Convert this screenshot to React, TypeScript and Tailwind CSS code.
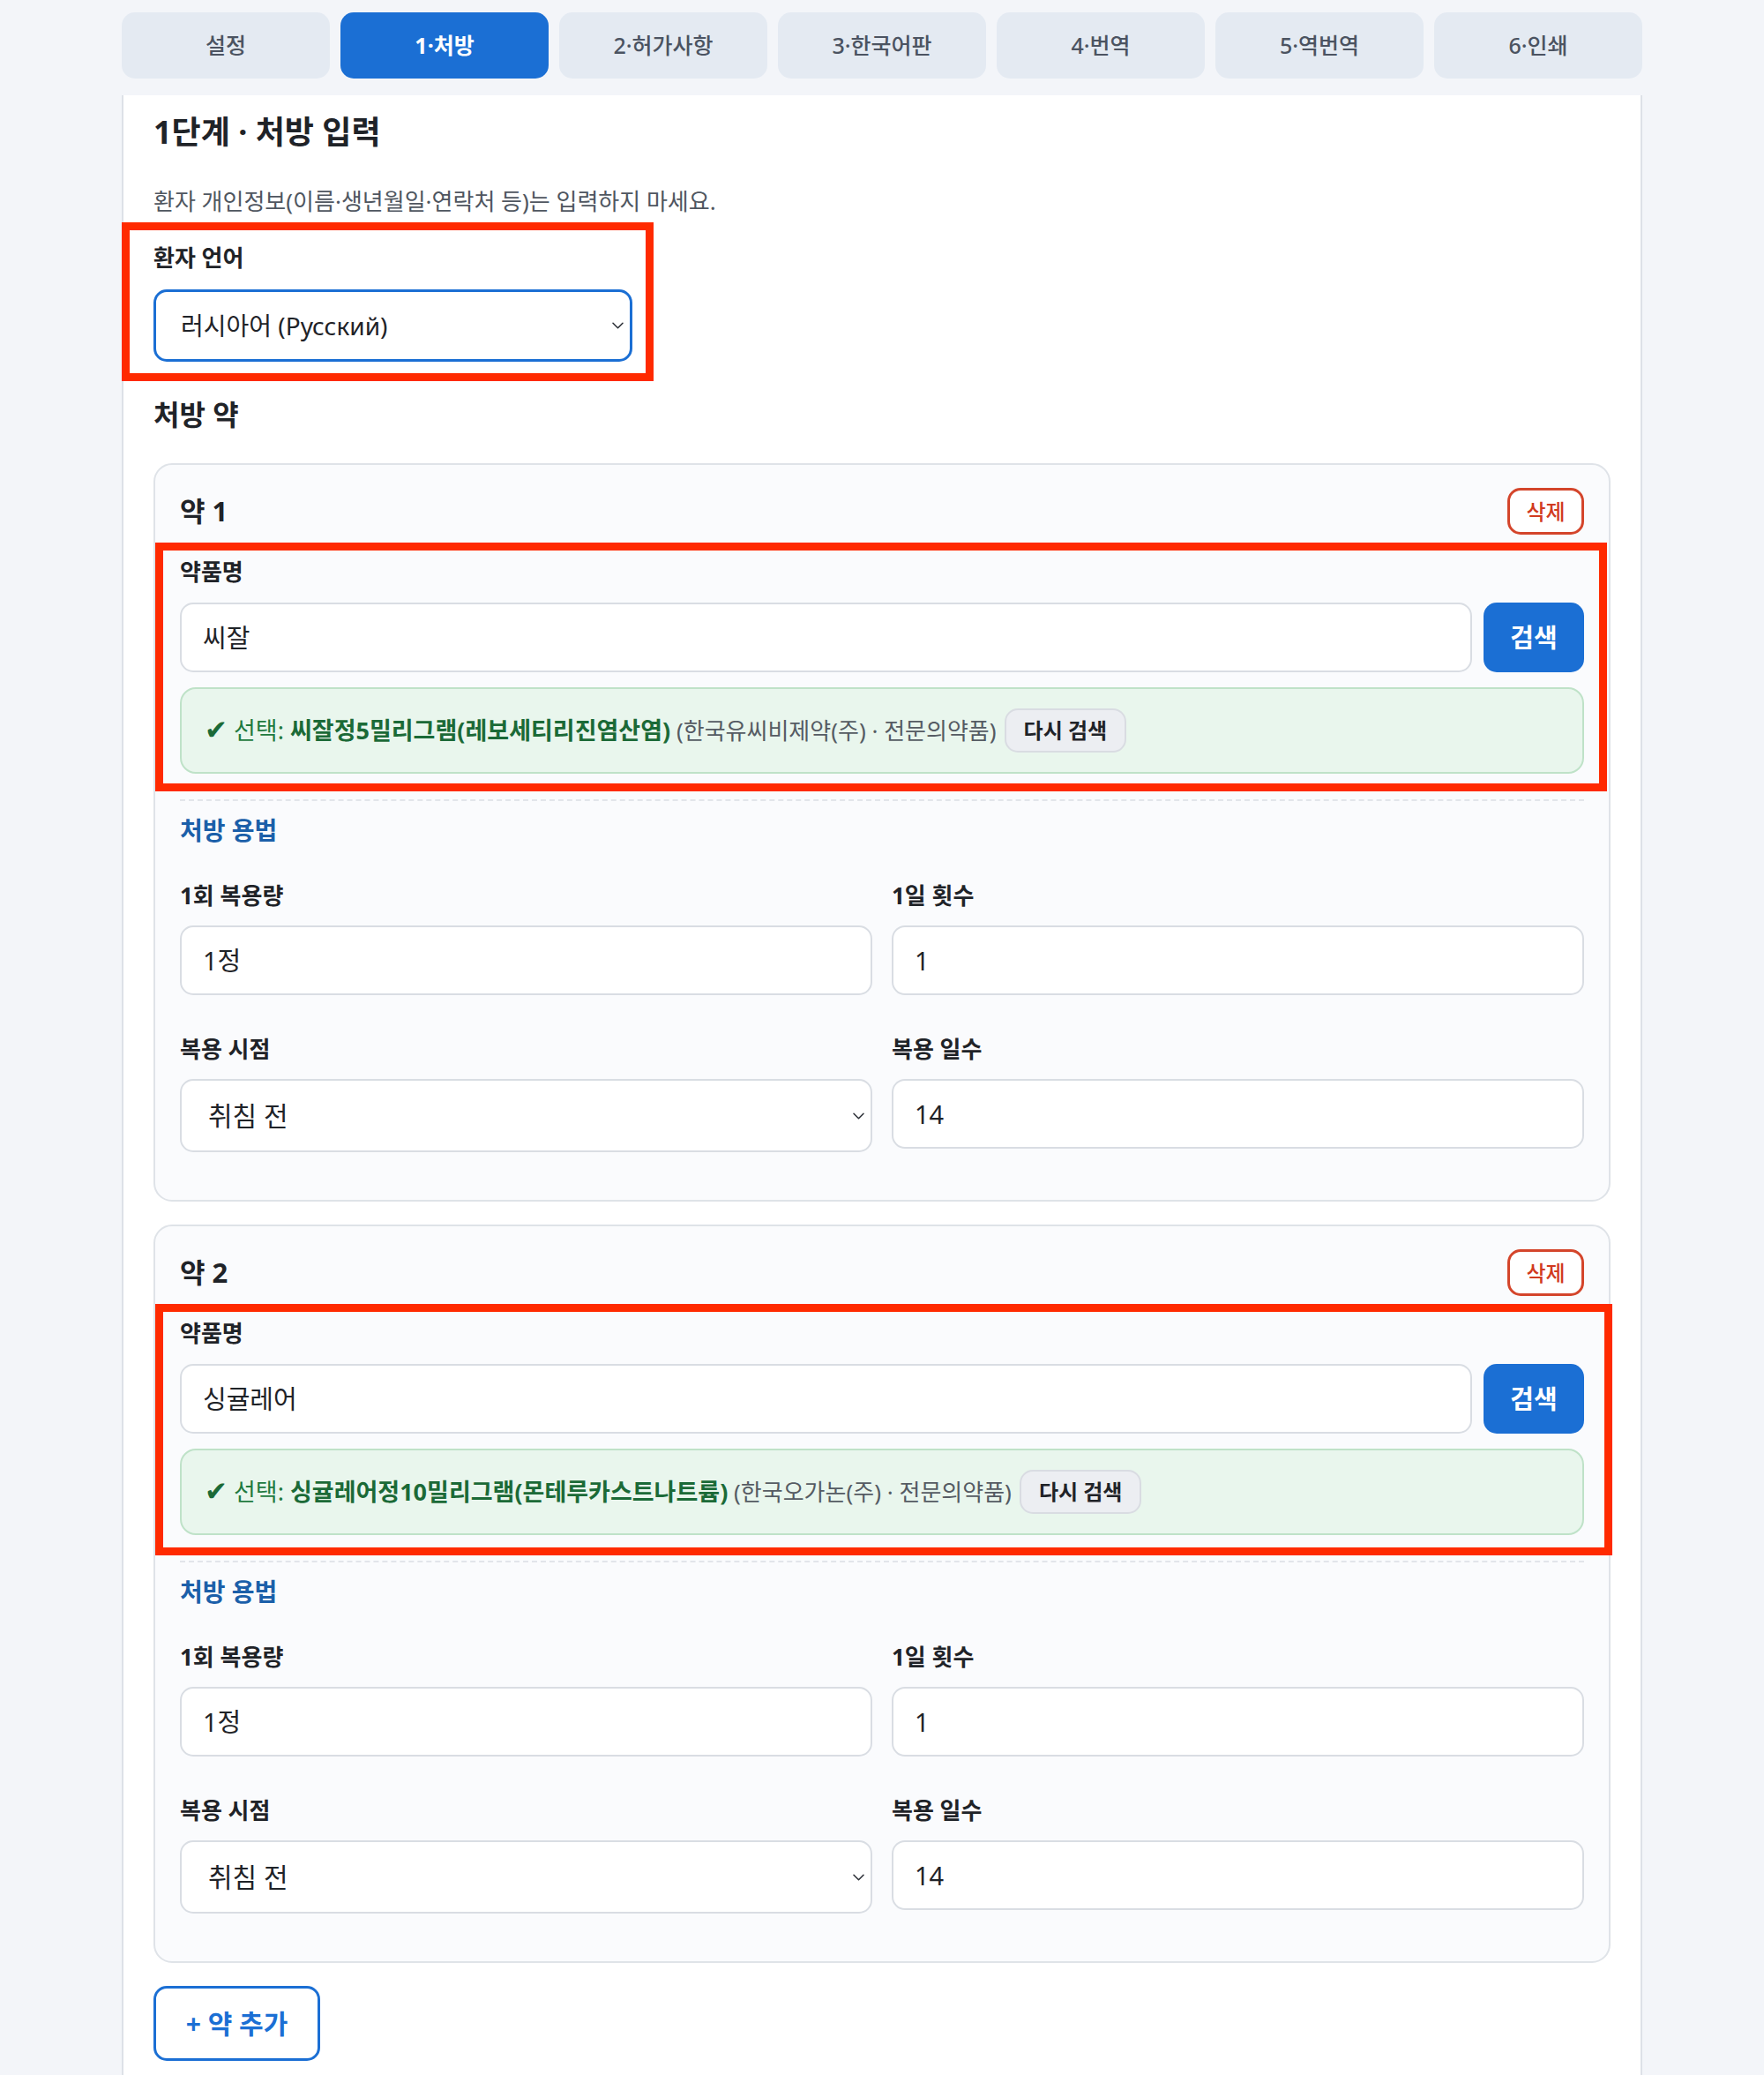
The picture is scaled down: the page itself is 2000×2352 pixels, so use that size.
import React from "react";

const tabs = ["설정", "1·처방", "2·허가사항", "3·한국어판", "4·번역", "5·역번역", "6·인쇄"];

function Chevron() {
  return (
    <svg width="13" height="8" viewBox="0 0 13 8" className="shrink-0">
      <path d="M1 1.2 L6.5 6.8 L12 1.2" fill="none" stroke="#2b2f36" strokeWidth="1.5" strokeLinecap="round" strokeLinejoin="round" />
    </svg>
  );
}

function Field({ label, value, select }: { label: string; value: string; select?: boolean }) {
  return (
    <div className="flex flex-col">
      <div className="text-[26px] leading-[32px] font-bold text-[#1f2328]">{label}</div>
      {select ? (
        <div className="mt-[18px] h-[83px] rounded-[15px] border-2 border-[#d9dde3] bg-white flex items-center justify-between pl-[30px] pr-[7px]">
          <span className="text-[30px] text-[#1f2328]">{value}</span>
          <Chevron />
        </div>
      ) : (
        <div className="mt-[18px] h-[79px] rounded-[15px] border-2 border-[#d9dde3] bg-white flex items-center pl-[24px]">
          <span className="text-[29px] text-[#1f2328]">{value}</span>
        </div>
      )}
    </div>
  );
}

function DrugCard({
  n,
  search,
  name,
  meta,
  redBottom,
  redRight,
}: {
  n: number;
  search: string;
  name: string;
  meta: string;
  redBottom: string;
  redRight: string;
}) {
  return (
    <div className="rounded-[21px] border-2 border-[#dfe3e8] bg-[#fafbfd] px-[28px] pt-[26px] pb-[54px]">
      <div className="flex items-center justify-between h-[53px]">
        <span className="text-[31px] font-bold text-[#1f2328]">약 {n}</span>
        <div className="w-[87px] h-[53px] rounded-[15px] border-[3px] border-[#d4452b] bg-white flex items-center justify-center text-[24px] font-medium text-[#d13a20]">
          삭제
        </div>
      </div>
      <div className="relative mt-[26px]">
        <div className="text-[26px] leading-[32px] font-bold text-[#1f2328]">약품명</div>
        <div className="mt-[19px] flex gap-[13px]">
          <div className="flex-1 h-[79px] rounded-[15px] border-2 border-[#d9dde3] bg-white flex items-center pl-[24px]">
            <span className="text-[29px] text-[#1f2328]">{search}</span>
          </div>
          <div className="w-[114px] h-[79px] rounded-[15px] bg-[#1b6fd4] flex items-center justify-center text-[29px] font-bold text-white">
            검색
          </div>
        </div>
        <div className="mt-[17px] h-[98px] rounded-[18px] border-2 border-[#bfe2c8] bg-[#e9f6ed] flex items-center pl-[26px] gap-[9px]">
          <span className="text-[27px] text-[#1f7a3f] whitespace-nowrap">
            <span className="text-[31px] leading-none text-[#1b6a37]">✔</span>
            <span> 선택: </span>
            <span className="font-bold text-[#1b6a37]">{name}</span>
            <span className="text-[26px] text-[#555b63]"> {meta}</span>
          </span>
          <div className="h-[50px] px-[20px] rounded-[15px] border-2 border-[#d9dce2] bg-[#eceef2] flex items-center text-[24px] font-bold text-[#1f2328] whitespace-nowrap">
            다시 검색
          </div>
        </div>
        <div
          className={`pointer-events-none absolute -top-[17px] -left-[28px] border-[9px] border-[#ff2a00] ${redBottom} ${redRight}`}
        />
      </div>
      <div className="mt-[29px] border-t-2 border-dashed border-[#e2e5ea]" />
      <div className="mt-[16px] text-[28px] leading-[34px] font-bold text-[#1b5fa9]">처방 용법</div>
      <div className="mt-[41px] grid grid-cols-2 gap-x-[22px] gap-y-[45px]">
        <Field label="1회 복용량" value="1정" />
        <Field label="1일 횟수" value="1" />
        <Field label="복용 시점" value="취침 전" select />
        <Field label="복용 일수" value="14" />
      </div>
    </div>
  );
}

export default function App() {
  return (
    <div className="min-h-[2352px] bg-[#f3f5f9] font-['Noto_Sans','Noto_Sans_CJK_KR',sans-serif] text-[#1f2328]">
      <div className="mx-auto w-[1724px]">
        <div className="pt-[14px] grid grid-cols-7 gap-[12px]">
          {tabs.map((t, i) => (
            <div
              key={t}
              className={
                i === 1
                  ? "h-[75px] rounded-[15px] bg-[#1b6fd4] flex items-center justify-center text-[25px] font-bold text-white"
                  : "h-[75px] rounded-[15px] bg-[#e4eaf2] flex items-center justify-center text-[25px] font-medium text-[#4b5361]"
              }
            >
              {t}
            </div>
          ))}
        </div>
        <div className="mt-[19px] bg-white border-x-2 border-[#dde1e7] px-[34px] pt-[22px] pb-[19px]">
          <h1 className="text-[36px] leading-[40px] font-bold text-[#1f2328]">1단계 · 처방 입력</h1>
          <p className="mt-[42px] text-[26px] leading-[32px] text-[#4f5660]">
            환자 개인정보(이름·생년월일·연락처 등)는 입력하지 마세요.
          </p>
          <div className="relative mt-[32px] w-[543px]">
            <div className="text-[26px] leading-[32px] font-bold text-[#1f2328]">환자 언어</div>
            <div className="mt-[20px] h-[82px] rounded-[15px] border-[3px] border-[#1b6fd4] bg-white flex items-center justify-between pl-[28px] pr-[7px]">
              <span className="text-[28px] text-[#1f2328]">러시아어 (Русский)</span>
              <Chevron />
            </div>
            <div className="pointer-events-none absolute -top-[24px] -bottom-[22px] -left-[36px] -right-[24px] border-[9px] border-[#ff2a00]" />
          </div>
          <div className="mt-[40px] text-[32px] leading-[40px] font-bold text-[#1f2328]">처방 약</div>
          <div className="mt-[35px] flex flex-col gap-[26px]">
            <DrugCard
              n={1}
              search="씨잘"
              name="씨잘정5밀리그램(레보세티리진염산염)"
              meta="(한국유씨비제약(주) · 전문의약품)"
              redBottom="-bottom-[20px]"
              redRight="-right-[26px]"
            />
            <DrugCard
              n={2}
              search="싱귤레어"
              name="싱귤레어정10밀리그램(몬테루카스트나트륨)"
              meta="(한국오가논(주) · 전문의약품)"
              redBottom="-bottom-[23px]"
              redRight="-right-[32px]"
            />
          </div>
          <div className="mt-[26px] w-[189px] h-[85px] rounded-[15px] border-[3px] border-[#1b6fd4] bg-white flex items-center justify-center text-[30px] font-bold text-[#1b6fd4]">
            + 약 추가
          </div>
        </div>
      </div>
    </div>
  );
}
